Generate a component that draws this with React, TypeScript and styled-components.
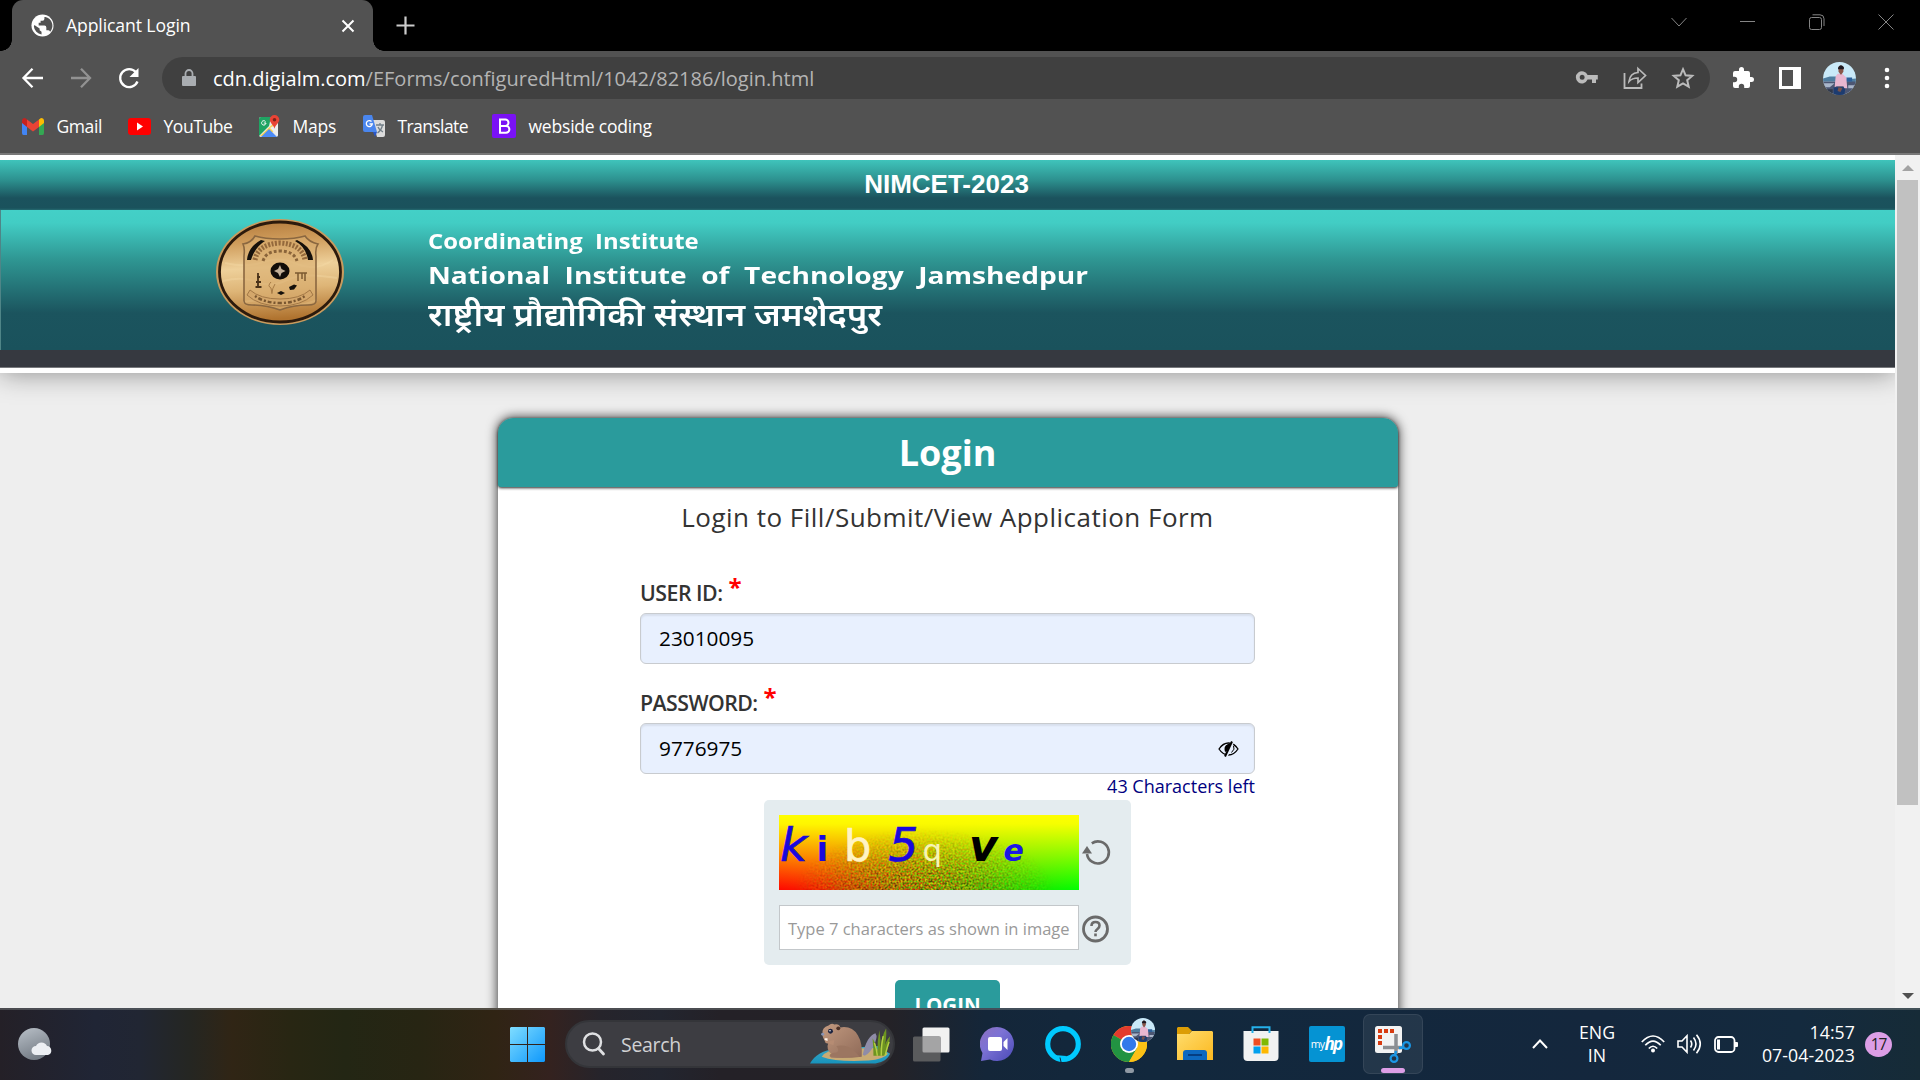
import React from 'react';
import styled, { createGlobalStyle } from 'styled-components';

const Global = createGlobalStyle`
  * { box-sizing: border-box; }
  html, body { margin: 0; padding: 0; overflow: hidden; background: #000; }
  svg { display: block; flex: none; }
`;

const UI = '"Open Sans", "Noto Sans", sans-serif';

const Screen = styled.div`
  width: 1920px; height: 1080px; display: flex; flex-direction: column;
  font-family: ${UI}; overflow: hidden;
`;

/* ---------- browser chrome ---------- */
const TabStrip = styled.div`
  height: 51px; background: #000; display: flex; flex: none; padding-left: 12px;
`;
const Tab = styled.div`
  width: 361px; height: 51px; background: #525252; border-radius: 11px 11px 0 0;
  display: flex; align-items: center; padding: 0 15px 0 19px; position: relative; color: #fff;
  &::before, &::after {
    content: ''; position: absolute; bottom: 0; width: 11px; height: 11px;
  }
  &::before { left: -11px; background: radial-gradient(circle at 0 0, transparent 10.5px, #525252 11px); }
  &::after { right: -11px; background: radial-gradient(circle at 100% 0, transparent 10.5px, #525252 11px); }
`;
const TabTitle = styled.span`
  font-size: 17.6px; letter-spacing: -0.1px; margin-left: 12px; flex: 1; white-space: nowrap; line-height: 24px; padding-bottom: 1px;
`;
const NewTab = styled.div`
  margin-left: 23px; display: flex; align-items: center; flex: 1;
`;
const WindowControls = styled.div`
  display: flex; width: 276px; height: 43px; align-items: center;
`;
const WindowButton = styled.div`
  width: 69px; display: flex; justify-content: center;
`;
const Toolbar = styled.div`
  height: 54px; background: #525252; display: flex; flex: none; align-items: center; padding: 0 24px 0 20px;
`;
const NavGroup = styled.div`
  display: flex; gap: 24px; width: 142px;
`;
const Omnibox = styled.div`
  width: 1548px; height: 42px; border-radius: 21px; background: #404040;
  display: flex; align-items: center; padding: 0 15px 0 20px;
`;
const Url = styled.div`
  flex: 1; margin-left: 17px; font-size: 20px; letter-spacing: 0; color: #b4b4b4; white-space: nowrap;
  line-height: 28px; padding-top: 2px;
  b { font-weight: 400; color: #fff; }
`;
const OmniIcons = styled.div`display: flex; gap: 24px;`;
const Extensions = styled.div`
  display: flex; align-items: center; flex: 1; justify-content: space-between; padding-left: 21px;
`;
const Bookmarks = styled.div`
  height: 48px; background: #525252; display: flex; flex: none; padding: 0 0 6px 22px; align-items: center;
`;
const Bookmark = styled.div<{ $w: number }>`
  width: ${p => p.$w}px; display: flex; align-items: center; gap: 12.5px; color: #fff; flex: none;
`;
const BookmarkLabel = styled.span<{ $ls?: number }>`
  font-size: 17.5px; line-height: 24px; padding-bottom: 1px; letter-spacing: ${p => p.$ls ?? 0}px; white-space: nowrap;
`;
const ChromeEdge = styled.div`height: 2px; flex: none; background: #787878;`;

/* ---------- web page ---------- */
const Viewport = styled.div`height: 853px; flex: none; display: flex; overflow: hidden;`;
const Page = styled.main`
  width: 1895px; height: 853px; background: #eee; overflow: hidden; display: flex; flex-direction: column; align-items: center;
`;
const Header = styled.header`
  width: 1895px; height: 218px; flex: none; background: #fff; padding: 5px 0; box-shadow: 0 0 26px rgba(0,0,0,.42);
  display: flex; flex-direction: column;
`;
const ExamBar = styled.div`
  height: 50px; flex: none; display: flex; justify-content: center;
  background: linear-gradient(#3fc4bb 0, #2d918f 20px, #1b525d 38px, #1a525c 48px, #246a70 50px);
`;
const ExamTitle = styled.h1`
  margin: 0; padding-right: 2px; font: 700 26px/48px "Liberation Sans", Arial, sans-serif; color: #fff;
`;
const Banner = styled.div`
  height: 140px; flex: none; display: flex; padding: 8px 0 0 214px; border-left: 1px solid #4f8587;
  background: linear-gradient(#43d0c7 0, #42cdc4 13px, #2f9793 49px, #1b545e 103px, #1a525c 139px);
`;
const BannerText = styled.div`
  margin-left: 83px; display: flex; flex-direction: column; color: #fff; align-items: flex-start;
`;
const BannerLine = styled.div<{ $size: number; $line: number; $sx: number; $weight?: number }>`
  font-size: ${p => p.$size}px; line-height: ${p => p.$line}px; height: ${p => p.$line}px; white-space: pre; font-weight: ${p => p.$weight ?? 700};
  transform: scaleX(${p => p.$sx}); transform-origin: 0 50%;
  font-family: "Open Sans", "Noto Sans Devanagari", "Noto Sans", sans-serif;
`;
const FooterStrip = styled.div`height: 18px; flex: none; background: #363940; border-bottom: 1px solid #77797d;`;

const Card = styled.section`
  width: 900px; height: 700px; margin-top: 45px; flex: none; background: #fff; border-radius: 15px 15px 0 0;
  box-shadow: 0 0 11px 1px rgba(0,0,0,.72); display: flex; flex-direction: column; align-items: center;
`;
const CardHead = styled.div`
  width: 100%; height: 69px; background: #2a9b9c; border-radius: 15px 15px 3px 3px; flex: none;
  box-shadow: 0 1px 3px rgba(0,0,0,.85); color: #fff; text-align: center;
  font-size: 36px; line-height: 70px; font-weight: 700;
`;
const Subtitle = styled.div`
  margin-top: 12px; font-size: 26px; line-height: 36px; color: #333; letter-spacing: 0.48px; white-space: nowrap;
`;
const Form = styled.div`width: 615px; display: flex; flex-direction: column; padding-top: 41px;`;
const Label = styled.label<{ $ls: number }>`
  height: 37px; font-size: 21.3px; line-height: 33px; font-weight: 600; color: #333; display: flex;
  letter-spacing: ${p => p.$ls}px; white-space: nowrap;
`;
const Star = styled.span`color: #f00; font-size: 24px; line-height: 22px; margin-left: 6px; font-weight: 700;`;
const Field = styled.div<{ $gap: number }>`
  height: 51px; border: 1px solid #c8cbcf; border-radius: 6px; background: #e8f0fe; margin-bottom: ${p => p.$gap}px;
  padding: 0 15px 0 18px; display: flex; align-items: center; justify-content: space-between; color: #000;
  font-size: 20.8px; line-height: 29px; box-shadow: inset 0 2px 2px rgba(0,0,0,.07);
`;
const CharsLeft = styled.div`
  text-align: right; font-size: 18px; line-height: 25px; height: 26px; color: #000080;
`;
const CaptchaBox = styled.div`
  width: 367px; height: 165px; border-radius: 5px; background: #e4ecef; margin: 0 0 15px 0; padding: 15px;
  display: flex; flex-direction: column; gap: 15px; flex: none;
`;
const CaptchaRow = styled.div`display: flex; align-items: center; gap: 3px;`;
const CaptchaInput = styled.div`
  width: 300px; height: 45px; border: 1px solid #c3c7ca; background: #fff; padding-left: 8px; color: #999;
  font-size: 16.5px; line-height: 46px; white-space: nowrap;
`;
const LoginButton = styled.div`
  width: 105px; height: 50px; border-radius: 5px; background: #2a9b9c; color: #fff; text-align: center;
  font-size: 20.5px; font-weight: 700; line-height: 51px;
`;
const Scrollbar = styled.div`
  width: 25px; background: #f1f1f1; display: flex; flex-direction: column; align-items: center; padding: 10px 0 9px;
`;
const Thumb = styled.div`width: 21px; height: 625px; margin-top: 9px; background: #c1c1c1;`;
const Arrow = styled.div<{ $down?: boolean }>`
  width: 0; height: 0; border-left: 6px solid transparent; border-right: 6px solid transparent;
  ${p => p.$down ? 'border-top: 6px solid #505050; margin-top: auto;' : 'border-bottom: 6px solid #a3a3a3;'}
`;

/* ---------- taskbar ---------- */
const Taskbar = styled.footer`
  height: 72px; flex: none; display: flex; align-items: center; padding: 2px 0;
  box-shadow: inset 0 2px 0 rgba(130,135,135,.42);
  background: linear-gradient(90deg, #242027 0, #202535 95px, #212633 140px, #252622 190px, #302515 232px, #282613 290px,
    #232614 345px, #272513 420px, #302414 495px, #34221f 550px, #26242b 600px, #22252f 660px, #242127 720px, #242227 890px, #142639 985px,
    #12283d 1150px, #14273d 1600px, #142a3e 1800px, #162b37 1920px);
  color: #fff;
`;
const Weather = styled.div`width: 494px; padding-left: 17px; flex: none;`;
const Cell = styled.div`
  width: 66px; height: 68px; flex: none; display: flex; align-items: center; justify-content: center; position: relative;
`;
const ActiveTile = styled.div`
  width: 60px; height: 60px; border-radius: 7px; background: rgba(255,255,255,.07); border: 1px solid rgba(255,255,255,.08);
  display: flex; align-items: center; justify-content: center;
`;
const Indicator = styled.div<{ $w: number; $c: string }>`
  position: absolute; bottom: 5px; left: calc(50% - ${p => p.$w / 2}px); width: ${p => p.$w}px; height: 5px; border-radius: 3px; background: ${p => p.$c};
`;
const Search = styled.div`
  width: 330px; height: 48px; border-radius: 24px; background: #3d3d42; border: 2px solid #343539; margin: 0 3px 0 5px; flex: none;
  display: flex; align-items: center; padding-left: 15px; font-size: 19.5px; color: #d0d1d3; overflow: hidden;
  letter-spacing: -0.3px;
`;
const SearchText = styled.span`margin-left: 15px; flex: 1;`;
const MyHp = styled.div`
  width: 36px; height: 36px; border-radius: 2px; background: #0593d3; display: flex; align-items: center; justify-content: center;
  font-size: 10.5px; line-height: 36px; letter-spacing: -0.6px;
  i { font: italic 700 17px/32px "Open Sans", sans-serif; letter-spacing: -1.8px; padding-right: 2px; }
`;
const Tray = styled.div`
  flex: 1; display: flex; align-items: center; justify-content: flex-end; padding-right: 28px; font-size: 17.7px; line-height: 23.5px;
`;
const Lang = styled.div`text-align: center; width: 44px; margin: 0 22px 0 27px; white-space: pre-line;`;
const TrayIcons = styled.div`display: flex; gap: 12px; align-items: center;`;
const Clock = styled.div`text-align: right; width: 100px; margin: 0 10px 0 17px; white-space: pre-line; letter-spacing: 0.08px;`;
const Badge = styled.div`
  width: 27px; height: 25px; border-radius: 50%; background: #dc9ee6; color: #222; font-size: 15.5px; line-height: 24px; text-align: center; letter-spacing: -1px;
`;
const ChromeAvatar = styled.div`position: absolute; top: 8px; right: 7px;`;

const Avatar = ({ size }: { size: number }) => (
  <svg width={size} height={size} viewBox="0 0 34 34">
    <defs><clipPath id={`av${size}`}><circle cx="17" cy="17" r="17" /></clipPath></defs>
    <g clipPath={`url(#av${size})`}>
      <rect width="34" height="34" fill="#c9e9f8" />
      <path d="M0 17l7-2h7v5H0zM22 18l12-1v6H22z" fill="#4f7ea0" />
      <path d="M0 20h34v14H0z" fill="#4c5673" />
      <path d="M0 22h12l-5 4H0zM26 24h8v3h-8z" fill="#a9b6ca" />
      <path d="M24 16h6v4h-6z" fill="#2d5f9a" />
      <path d="M11 26h12l-1 8H11z" fill="#1d3c70" />
      <path d="M15 12l5 0 4 4 1 11h-3l-1-2h-7l-2 1 1-11z" fill="#e9b7d0" />
      <path d="M16 5q2-3 5 0v5l-2 3h-1l-2-3z" fill="#8a5648" />
      <path d="M15.500 6q2.500-5 6-.500v2h-6z" fill="#1d1a22" />
      <path d="M0 28h10v6H0z" fill="#303849" />
      <path d="M16 26l4 1-2 4-3-1z" fill="#7b5148" />
    </g>
  </svg>
);

const Emblem = () => (
  <svg width="130" height="108" viewBox="0 0 130 108">
    <defs>
      <linearGradient id="wood" x1="0" y1="0" x2=".08" y2="1">
        <stop offset="0" stopColor="#b47b3c" /><stop offset=".22" stopColor="#cf9c5b" /><stop offset=".48" stopColor="#eed09a" />
        <stop offset=".7" stopColor="#deb577" /><stop offset="1" stopColor="#b0732f" />
      </linearGradient>
    </defs>
    <ellipse cx="65" cy="54" rx="64" ry="53" fill="#c99b5e" />
    <ellipse cx="65" cy="54" rx="60.500" ry="50" fill="url(#wood)" stroke="#2c1a0c" strokeWidth="2.800" />
    <path d="M8 63q20-5 34 1t30-2 50-2M10 45q22 5 38-1t34 2 36-4M28 84q25-4 40 1t34-3" stroke="#f6dda9" strokeWidth="2" fill="none" opacity=".35" />
    <path d="M28 26q8-1 12-8 10 3 25 3 15 0 25-3 4 6 13 8-3 4-2 12v45q0 4-8 4-15 0-28 5-13-5-28-5-8 0-8-4V38q1-8-1-12z" fill="#d9ae70" fillOpacity=".6" stroke="#8a6740" strokeWidth="1.600" />
    <path d="M32 42q1-13 14-20l4 1q-10 6-14 19zM98 42q-1-13-16-20l-2 1q11 6 13 19z" fill="#15100b" />
    <path d="M40 42q3-16 25-17 22 1 25 17" fill="none" stroke="#94693c" strokeWidth="5" strokeDasharray="2 1.500" />
    <path d="M48 43q3-10 17-10 14 0 17 10" fill="none" stroke="#8a643a" strokeWidth="3" strokeDasharray="3 2" />
    <ellipse cx="65" cy="53" rx="9.500" ry="8.500" fill="#120d09" />
    <path d="M65 47l1.500 4 4 2-4 2-1.500 4-2-4-4-2 4-2z" fill="#c4b098" />
    <path d="M43 55v14M40.500 69h6M42 59h3M41 64h5" stroke="#4a3219" strokeWidth="1.800" />
    <path d="M80 55h12M83 55v8M87 55v6M90 55v8" stroke="#7c5a30" strokeWidth="1.500" />
    <path d="M56 64q-4 4 0 6l1 6M60 66q-3 5-3 9" stroke="#a77b46" strokeWidth="1" fill="none" />
    <path d="M74 69l5-2.500 3 1-3 4-4 .500zM62 75l4-2 4 2-4 2z" fill="#15100b" />
    <path d="M35 72q10 9 30 9t30-9l3 5q-12 11-33 11T32 77z" fill="#d4a76b" stroke="#a37846" strokeWidth="1" />
    <path d="M40 78q10 7 25 7t25-7" fill="none" stroke="#7a5730" strokeWidth="2.500" strokeDasharray="2 2 4 2" />
  </svg>
);

const Captcha = () => (
  <svg width="300" height="75" viewBox="0 0 300 75" fontFamily="'DejaVu Sans', sans-serif">
    <defs>
      <linearGradient id="rg" x1="0" x2="1" y1="0" y2="0">
        <stop offset="0" stopColor="#ff0800" /><stop offset=".15" stopColor="#f32000" /><stop offset=".45" stopColor="#9a7000" /><stop offset=".75" stopColor="#2fd400" /><stop offset="1" stopColor="#00ff00" />
      </linearGradient>
      <linearGradient id="yl" x1="0" x2="0" y1="0" y2="1">
        <stop offset="0" stopColor="#ff0" /><stop offset=".12" stopColor="#ff0" stopOpacity=".96" /><stop offset=".55" stopColor="#ff0" stopOpacity=".5" /><stop offset="1" stopColor="#ff0" stopOpacity="0" />
      </linearGradient>
      <radialGradient id="fade" gradientUnits="userSpaceOnUse" cx="0" cy="0" r="1" gradientTransform="translate(145 75) scale(130 62)">
        <stop offset="0" stopColor="#fff" stopOpacity=".75" /><stop offset=".5" stopColor="#fff" stopOpacity=".42" /><stop offset="1" stopColor="#fff" stopOpacity="0" />
      </radialGradient>
      <mask id="nm"><rect width="300" height="75" fill="url(#fade)" /></mask>
      <filter id="grain" x="0" y="0" width="100%" height="100%" colorInterpolationFilters="sRGB">
        <feTurbulence type="fractalNoise" baseFrequency=".5" numOctaves="3" seed="4" />
        <feColorMatrix values="2.800 0 0 0 -.800  0 2.800 0 0 -.850  0 0 0 0 .05  0 0 0 0 .8" />
      </filter>
    </defs>
    <rect width="300" height="75" fill="url(#rg)" />
    <rect width="300" height="75" fill="url(#yl)" />
    <g mask="url(#nm)"><rect width="300" height="75" filter="url(#grain)" /></g>
    <text x="1" y="46" fontSize="47" fontStyle="italic" fill="#1a08dc" stroke="#1a08dc" strokeWidth=".7">k</text>
    <text x="37.500" y="46" fontSize="34" fontWeight="700" fill="#1a08dc">i</text>
    <text x="65" y="46" fontSize="43" fill="#fff3c4" stroke="#fff3c4" strokeWidth=".7">b</text>
    <text x="109.500" y="46" fontSize="47" fontStyle="italic" fill="#1a08dc" stroke="#1a08dc" strokeWidth=".7">5</text>
    <text x="143.500" y="46" fontSize="31" fill="#f7f5b4">q</text>
    <text x="190" y="46" fontSize="44" fontWeight="700" fontStyle="italic" fill="#000">v</text>
    <text x="224.500" y="46" fontSize="30" fontWeight="700" fontStyle="italic" fill="#1b16e6">e</text>
  </svg>
);

const Beaver = () => (
  <svg width="84" height="44" viewBox="0 0 86 44">
    <defs>
      <linearGradient id="fur" x1="0" x2="1" y1="0" y2="1"><stop offset="0" stopColor="#c29a80" /><stop offset="1" stopColor="#8f6a58" /></linearGradient>
      <linearGradient id="water" x1="0" x2="0" y1="0" y2="1"><stop offset="0" stopColor="#3ea9c7" /><stop offset="1" stopColor="#1793bb" /></linearGradient>
    </defs>
    <path d="M1 42Q8 29 26 27L70 24l13 8q-3 8-15 10z" fill="url(#water)" />
    <path d="M13 35q4-7 20-8l34-1 14 6q-5 6-20 7-32 2-48-4z" fill="#c8ab74" />
    <path d="M55 33Q59 14 68 11q3 4-2 13-4 8-9 10z" fill="#8f8ca8" />
    <path d="M14 11Q13 5 20 3q3-3 6-1 5-1 6 3 12-2 18 8 5 8 4 22-15 2-31 1-4-2 0-4-6-4-3-12-5-1-6-6z" fill="url(#fur)" />
    <path d="M28 24q11-2 18 5l6 6H23q-4-2 2-4 8 0 3-7z" fill="#9c7661" />
    <path d="M15 16q3 4 6 3l5-1-1 5-8-2z" fill="#b68c73" />
    <circle cx="22" cy="9" r="2.500" fill="#1d2440" /><circle cx="21.500" cy="8.500" r=".8" fill="#fff" />
    <circle cx="30" cy="6" r="2" fill="#4b3026" /><circle cx="14" cy="12" r="1.500" fill="#8794b5" />
    <path d="M16 16l3 0v3l-3-1z" fill="#fff3ea" />
    <path d="M66 34q0-10-1-18 4 6 5 14 0-12 2-22 2 10 1 20 1-13 6-22 1 13-3 22 3-10 7-14-1 12-6 20z" fill="#6d9421" />
    <path d="M70 34q-1-8-3-13M74 34q0-12 2-20M78 34q2-9 4-14" stroke="#b4cf43" strokeWidth="1.500" fill="none" />
  </svg>
);

export default function App() {
  return (
    <Screen>
      <Global />
      <TabStrip>
        <Tab>
          <svg width="23" height="23" viewBox="0 0 24 24"><circle cx="12" cy="12" r="11.500" fill="#fff" /><path d="M3.500 11.500L9 15v2l2 1.500v3A9.500 9.500 0 0 1 3 13zM14 3v2q0 2-2 2h-2v2H8v3h6q2 0 2 2v3h2q1 0 2 1.500A9.500 9.500 0 0 0 15 3z" fill="#525252" /></svg>
          <TabTitle>Applicant Login</TabTitle>
          <svg width="20" height="20" viewBox="0 0 20 20"><path d="M4.500 4.500l11 11M15.500 4.500l-11 11" stroke="#fff" strokeWidth="2" /></svg>
        </Tab>
        <NewTab>
          <svg width="19" height="19" viewBox="0 0 19 19"><path d="M9.500.500v18M.500 9.500h18" stroke="#ccc" strokeWidth="2.200" /></svg>
        </NewTab>
        <WindowControls>
          <WindowButton><svg width="16" height="16" viewBox="0 0 16 16"><path d="M.500 4L8 12 15.500 4" fill="none" stroke="#858585" /></svg></WindowButton>
          <WindowButton><svg width="16" height="16" viewBox="0 0 16 16"><path d="M0 7.500h15" stroke="#858585" /></svg></WindowButton>
          <WindowButton><svg width="16" height="16" viewBox="0 0 16 16"><rect x=".5" y="3.500" width="12" height="12" rx="2" fill="none" stroke="#858585" /><path d="M3.500.800H11Q15 .800 15 4.800v7.200" fill="none" stroke="#858585" /></svg></WindowButton>
          <WindowButton><svg width="16" height="16" viewBox="0 0 16 16"><path d="M.500.500l15 15M15.500.500l-15 15" stroke="#858585" /></svg></WindowButton>
        </WindowControls>
      </TabStrip>
      <Toolbar>
        <NavGroup>
          <svg width="24" height="24" viewBox="0 0 24 24"><path d="M23 12H4M12.500 2.800L3.500 12l9 9.200" fill="none" stroke="#fff" strokeWidth="2.300" /></svg>
          <svg width="24" height="24" viewBox="0 0 24 24"><path d="M3 12h19M13 2.800L22 12l-9 9.200" fill="none" stroke="#929292" strokeWidth="2.300" /></svg>
          <svg width="24" height="24" viewBox="-1 0 24 24"><path d="M20.500 15.500A9 9 0 1 1 19 6.200" fill="none" stroke="#fff" strokeWidth="2.300" /><path d="M21.500 2v9h-9z" fill="#fff" /></svg>
        </NavGroup>
        <Omnibox>
          <svg width="14" height="18" viewBox="0 0 14 18"><path d="M1 7h12q1 0 1 1v8q0 1-1 1H1q-1 0-1-1V8q0-1 1-1z" fill="#a9adb1" /><path d="M3.500 7V4.500a3.500 3.500 0 0 1 7 0V7" fill="none" stroke="#a9adb1" strokeWidth="1.800" /></svg>
          <Url><b>cdn.digialm.com</b>/EForms/configuredHtml/1042/82186/login.html</Url>
          <OmniIcons>
            <svg width="24" height="24" viewBox="0 0 24 24"><path d="M12.600 9a6.100 6.100 0 1 0 0 4.600H17V17h4v-3.400h1.800V9zM7.200 13.800a2.500 2.500 0 1 1 0-5 2.500 2.500 0 0 1 0 5z" fill="#bbb" fillRule="evenodd" /></svg>
            <svg width="24" height="24" viewBox="0 0 24 24"><path d="M1.500 7v15h17v-4.500" fill="none" stroke="#bbb" strokeWidth="1.800" /><path d="M15 2.500l7.500 7-7.500 7v-4.500q-6 0-9 3.500 1-8.500 9-9z" fill="none" stroke="#bbb" strokeWidth="1.700" strokeLinejoin="miter" /></svg>
            <svg width="24" height="24" viewBox="0 0 24 24"><path d="M12 3.200l2.600 6.100 6.600.600-5 4.300 1.500 6.500-5.700-3.400-5.700 3.400 1.500-6.500-5-4.300 6.600-.600z" fill="none" stroke="#bbb" strokeWidth="2" /></svg>
          </OmniIcons>
        </Omnibox>
        <Extensions>
          <svg width="24" height="24" viewBox="0 0 24 24"><path d="M20.500 11H19V7a2 2 0 0 0-2-2h-4V3.500a2.500 2.500 0 0 0-5 0V5H4a2 2 0 0 0-2 2v3.800h1.500a2.700 2.700 0 0 1 0 5.400H2V20a2 2 0 0 0 2 2h3.800v-1.500a2.700 2.700 0 0 1 5.400 0V22H17a2 2 0 0 0 2-2v-4h1.500a2.500 2.500 0 0 0 0-5z" fill="#fff" /></svg>
          <svg width="24" height="22" viewBox="-2 0 24 22"><path d="M0 0h22v22H0zM3 3v16h11V3z" fill="#fff" fillRule="evenodd" /></svg>
          <Avatar size={33} />
          <svg width="18" height="22" viewBox="0 0 18 22"><g fill="#fff"><circle cx="9" cy="3" r="2.300" /><circle cx="9" cy="11" r="2.300" /><circle cx="9" cy="19" r="2.300" /></g></svg>
        </Extensions>
      </Toolbar>
      <Bookmarks>
        <Bookmark $w={106}>
          <svg width="22" height="17" viewBox="0 0 22 17"><path d="M0 2v13q0 2 1.500 2H5V5z" fill="#4285f4" /><path d="M22 2v13q0 2-1.500 2H17V5z" fill="#34a853" /><path d="M0 3q0-3 3-3l2 1.500V9L0 5z" fill="#c5221f" /><path d="M5 1.500L11 6l6-4.500V9l-6 4.500L5 9z" fill="#ea4335" /><path d="M22 3q0-3-3-3l-2 1.500V9l5-4z" fill="#fbbc04" /></svg>
          <BookmarkLabel $ls={-0.4}>Gmail</BookmarkLabel>
        </Bookmark>
        <Bookmark $w={131}>
          <svg width="23" height="17" viewBox="0 0 23 17"><rect width="23" height="17" rx="3" fill="#f00" /><path d="M9 4.500l6 4-6 4z" fill="#fff" /></svg>
          <BookmarkLabel $ls={-0.45}>YouTube</BookmarkLabel>
        </Bookmark>
        <Bookmark $w={104}>
          <svg width="21" height="22" viewBox="0 0 21 22"><rect y="2" width="19" height="20" rx="2" fill="#e9e9e9" /><path d="M2 2h10l-2 9L0 21V4q0-2 2-2z" fill="#1fa463" /><path d="M1 21L16 7l3 2v2l-9 10z" fill="#fbd24c" /><path d="M2 22l8-8 8 8z" fill="#4c8bf5" /><path d="M11 13l8 8V8z" fill="#eee" /><path d="M15.500 0a4.800 4.800 0 0 1 4.800 4.800c0 3-3.800 5-4.800 9-1-4-4.800-6-4.800-9A4.800 4.800 0 0 1 15.500 0z" fill="#ea4335" /><circle cx="15.500" cy="4.800" r="1.800" fill="#7b231c" /><path d="M6.500 6.500A2.200 2.200 0 1 0 7 8H4.800" stroke="#fff" fill="none" /></svg>
          <BookmarkLabel $ls={-0.2}>Maps</BookmarkLabel>
        </Bookmark>
        <Bookmark $w={129}>
          <svg width="22" height="22" viewBox="0 0 22 22"><path d="M9 5h11q2 0 2 2v13q0 2-2 2h-6z" fill="#dcdcdc" /><path d="M13 10h8M17 8v2M14.500 18q4-3 5-8M15 12q1 3 5 5" stroke="#727f88" fill="none" strokeWidth="1.300" /><path d="M2 0h7l5 17H2q-2 0-2-2V2q0-2 2-2z" fill="#4a86ee" /><path d="M10 17h4l-2 5z" fill="#2a56c6" /><path d="M8.500 6.500A3 3 0 1 0 9.300 9H6.500" stroke="#fff" fill="none" strokeWidth="1.300" /></svg>
          <BookmarkLabel $ls={-0.6}>Translate</BookmarkLabel>
        </Bookmark>
        <Bookmark $w={180}>
          <svg width="24" height="24" viewBox="0 0 24 24"><rect width="24" height="24" rx="2" fill="#7a12f5" /><path d="M8 5.500h5.300a3.200 3.200 0 0 1 0 6.400H8zM8 11.900h6a3.400 3.400 0 0 1 0 6.800H8z" fill="none" stroke="#fff" strokeWidth="2" /></svg>
          <BookmarkLabel $ls={-0.2}>webside coding</BookmarkLabel>
        </Bookmark>
      </Bookmarks>
      <ChromeEdge />

      <Viewport>
        <Page>
          <Header>
            <ExamBar><ExamTitle>NIMCET-2023</ExamTitle></ExamBar>
            <Banner>
              <Emblem />
              <BannerText>
                <BannerLine $size={20.5} $line={46} $sx={1.163}>{'Coordinating  Institute'}</BannerLine>
                <BannerLine $size={24} $line={21} $sx={1.171}>{'National  Institute  of  Technology  Jamshedpur'}</BannerLine>
                <BannerLine $size={32} $line={58} $sx={1.079} $weight={600}>राष्ट्रीय प्रौद्योगिकी संस्थान जमशेदपुर</BannerLine>
              </BannerText>
            </Banner>
            <FooterStrip />
          </Header>
          <Card>
            <CardHead>Login</CardHead>
            <Subtitle>Login to Fill/Submit/View Application Form</Subtitle>
            <Form>
              <Label $ls={-0.5}>USER ID:<Star>*</Star></Label>
              <Field $gap={22}>23010095</Field>
              <Label $ls={-0.55}>PASSWORD:<Star>*</Star></Label>
              <Field $gap={0}>
                9776975
                <svg width="21" height="16" viewBox="0 0 21 16"><path d="M1 8Q5 2 10.500 2T20 8q-4 6-9.500 6T1 8z" fill="none" stroke="#000" strokeWidth="1.300" /><path d="M10 3q-5 2-3 8l2-1 5-8z" fill="#000" /><path d="M15.500 0L8.500 16" stroke="#e8f0fe" strokeWidth="2" /><path d="M14 .500L7 15.500" stroke="#000" strokeWidth="2" /><path d="M15.500 5q2 3-2 6.500" stroke="#000" fill="none" /></svg>
              </Field>
              <CharsLeft>43 Characters left</CharsLeft>
            </Form>
            <CaptchaBox>
              <CaptchaRow>
                <Captcha />
                <svg width="30" height="30" viewBox="0 0 30 30"><path d="M9.800 5.300A11 11 0 1 1 5 16" fill="none" stroke="#6a6a6a" strokeWidth="2.600" /><path d="M0 15.500L5 8l5 7.500z" fill="#6a6a6a" /></svg>
              </CaptchaRow>
              <CaptchaRow>
                <CaptchaInput>Type 7 characters as shown in image</CaptchaInput>
                <svg width="27" height="30" viewBox="0 -2 27 30"><circle cx="13.500" cy="14" r="12" fill="none" stroke="#6a6a6a" strokeWidth="2.800" /><path d="M9.500 11q0-4 4-4t4 3.500q0 2-2 3.500t-2 3" fill="none" stroke="#6a6a6a" strokeWidth="2.600" /><rect x="12.200" y="18.500" width="2.600" height="2.800" fill="#6a6a6a" /></svg>
              </CaptchaRow>
            </CaptchaBox>
            <LoginButton>LOGIN</LoginButton>
          </Card>
        </Page>
        <Scrollbar><Arrow /><Thumb /><Arrow $down /></Scrollbar>
      </Viewport>

      <Taskbar>
        <Weather>
          <svg width="36" height="34" viewBox="0 0 36 34"><defs><linearGradient id="moon" x1="0" y1="0" x2=".4" y2="1"><stop offset="0" stopColor="#b9c0c8" /><stop offset="1" stopColor="#767e87" /></linearGradient></defs><circle cx="17" cy="17" r="16" fill="url(#moon)" /><path d="M19 28a4.500 4.500 0 0 1 0-9 6 6 0 0 1 11 0 4.600 4.600 0 0 1 1 9z" fill="#eceff3" /></svg>
        </Weather>
        <Cell>
          <svg width="35" height="35" viewBox="0 0 35 35"><defs><linearGradient id="win" x1="0" y1="0" x2="1" y2="1" gradientUnits="objectBoundingBox"><stop offset="0" stopColor="#7fddff" /><stop offset="1" stopColor="#0f98fb" /></linearGradient></defs><path d="M1 0h16v17H0V1zM18 0h16l1 1v16H18zM0 18h17v17H1l-1-1zM18 18h17v16l-1 1H18z" fill="url(#win)" /></svg>
        </Cell>
        <Search>
          <svg width="24" height="24" viewBox="0 0 24 24"><circle cx="10.500" cy="10" r="8.500" fill="none" stroke="#dfe0e2" strokeWidth="2.500" /><path d="M16.500 16.500l5 5.500" stroke="#dfe0e2" strokeWidth="2.800" strokeLinecap="round" /></svg>
          <SearchText>Search</SearchText>
          <Beaver />
        </Search>
        <Cell>
          <svg width="37" height="35" viewBox="0 0 37 35"><rect x="9.500" y=".5" width="27" height="25" rx="1.500" fill="#f1f1f1" /><rect y="9.500" width="27.500" height="25" rx="1.500" fill="#5a5b5d" /><path d="M9.500 9.500h18v16H11q-1.500 0-1.500-1.500z" fill="#a4a4a5" /></svg>
        </Cell>
        <Cell>
          <svg width="34" height="36" viewBox="0 0 34 36"><defs><linearGradient id="chat" x1="0" y1="0" x2="1" y2="1"><stop offset="0" stopColor="#8d70be" /><stop offset=".4" stopColor="#7c72d5" /><stop offset="1" stopColor="#4a4ab7" /></linearGradient></defs><path d="M17 1a17 17 0 1 1-7 32.500L1 35l1.500-8A17 17 0 0 1 17 1z" fill="url(#chat)" /><rect x="8" y="11" width="14" height="14" rx="2" fill="#fff" /><path d="M23.500 16l4-4v12l-4-4z" fill="#fff" /></svg>
        </Cell>
        <Cell>
          <svg width="36" height="36" viewBox="0 0 36 36"><circle cx="18" cy="18" r="15.300" fill="none" stroke="#00caff" strokeWidth="5.200" /><path d="M9 29q6 0 6.500 4v3l6-6z" fill="#00caff" /><path d="M15 31.500l1 4.500" stroke="#12283d" strokeWidth="1" /></svg>
        </Cell>
        <Cell>
          <svg width="36" height="36" viewBox="0 0 36 36"><circle cx="18" cy="18" r="18" fill="#fbc116" /><path d="M18 18L2.400 9A18 18 0 0 1 33.600 9H18z" fill="#e33b2e" /><path d="M2.400 9A18 18 0 0 0 18 36l8-14-8-4z" fill="#229342" /><path d="M18 9h15.600A18 18 0 0 1 18 36l8-13.500z" fill="#fbc116" /><circle cx="18" cy="18" r="9" fill="#fff" /><circle cx="18" cy="18" r="7.200" fill="#3279ea" /></svg>
          <ChromeAvatar><Avatar size={24} /></ChromeAvatar>
          <Indicator $w={9} $c="#8f99a4" />
        </Cell>
        <Cell>
          <svg width="36" height="34" viewBox="0 0 36 34"><defs><linearGradient id="fold" x1="0" y1="0" x2="1" y2="1"><stop offset="0" stopColor="#ffdd6e" /><stop offset="1" stopColor="#fbb81f" /></linearGradient></defs><path d="M1 0h10l4 4-4 4H0V1z" fill="#dc9d05" /><path d="M0 7h12l3-3h20l1 1v28H0z" fill="url(#fold)" /><path d="M6 33v-7q0-3 3-3h18q3 0 3 3v7z" fill="#0d68c0" /><path d="M11 28h14" stroke="#053d82" strokeWidth="2" /></svg>
        </Cell>
        <Cell>
          <svg width="36" height="36" viewBox="0 0 36 36"><path d="M.500 5h35v26q0 4-4 4h-27q-4 0-4-4z" fill="#f1f2f2" /><path d="M9.500 7V1.200h17V7" fill="none" stroke="#25b0ea" strokeWidth="2" /><path d="M10.500 12.500h7v7h-7z" fill="#f04e23" /><path d="M18.500 12.500h7v7h-7z" fill="#80b903" /><path d="M10.500 20.500h7v7h-7z" fill="#02a1ee" /><path d="M18.500 20.500h7v7h-7z" fill="#fdb802" /></svg>
        </Cell>
        <Cell><MyHp>my<i>hp</i></MyHp></Cell>
        <Cell>
          <ActiveTile>
            <svg width="37" height="37" viewBox="0 0 37 37"><rect x="0" y="0" width="27" height="27" rx="2.500" fill="#f3f3f3" /><path d="M3 3h4v4H3zM9 3h4v4H9zM15 3h4v4h-4zM3 9h4v4H3zM3 15h4v4H3z" fill="#d83b10" /><path d="M21 8v20M8 21.500h20" stroke="#8c8f93" strokeWidth="3.500" /><circle cx="31.500" cy="19.500" r="3.400" fill="none" stroke="#1a97e6" strokeWidth="2.200" /><circle cx="19" cy="32.500" r="3.400" fill="none" stroke="#1a97e6" strokeWidth="2.200" /><path d="M24 22l5-.500M21 25l-1 5" stroke="#1a97e6" strokeWidth="2.500" /></svg>
          </ActiveTile>
          <Indicator $w={24} $c="#dd9ee6" />
        </Cell>
        <Tray>
          <svg width="16" height="10" viewBox="0 0 16 10"><path d="M1 9l7-7.500L15 9" fill="none" stroke="#fff" strokeWidth="2" /></svg>
          <Lang>{'ENG\nIN'}</Lang>
          <TrayIcons>
            <svg width="24" height="18" viewBox="0 0 24 18"><g fill="none" stroke="#fff" strokeWidth="1.700"><path d="M.800 7q11.200-12 22.400 0M4.300 10.300q7.700-8.500 15.400 0M7.800 13.500q4.200-4.500 8.400 0" /></g><circle cx="12" cy="15.500" r="2" fill="#fff" /></svg>
            <svg width="25" height="20" viewBox="0 0 25 20"><g fill="none" stroke="#fff" strokeWidth="1.600"><path d="M1 7h4l5-5.200v16.400L5 13H1zM13.500 6.500q2.500 3.500 0 7M16.500 3.500q5 6.500 0 13M19.500.800q7.500 9.200 0 18.400" /></g></svg>
            <svg width="24" height="17" viewBox="0 0 24 17"><rect x="1" y="1" width="19.500" height="15" rx="3.500" fill="none" stroke="#fff" strokeWidth="1.800" /><rect x="3" y="3.500" width="3" height="10" fill="#fff" /><path d="M21 6h2q1 0 1 1v3q0 1-1 1h-2z" fill="#fff" /></svg>
          </TrayIcons>
          <Clock>{'14:57\n07-04-2023'}</Clock>
          <Badge>17</Badge>
        </Tray>
      </Taskbar>
    </Screen>
  );
}
